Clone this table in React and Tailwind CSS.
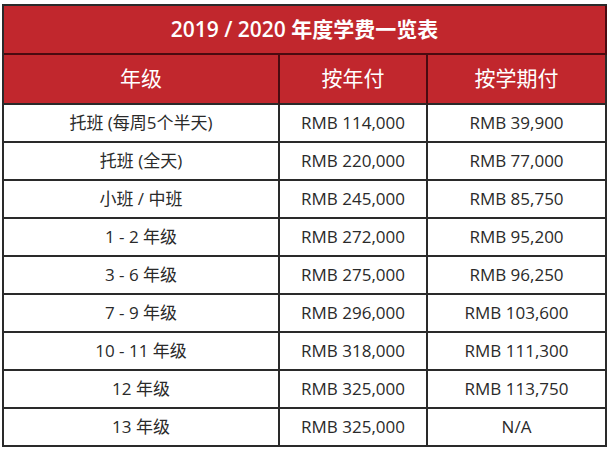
import React from "react";

const rows = [
  ["托班 (每周5个半天)", "RMB 114,000", "RMB 39,900"],
  ["托班 (全天)", "RMB 220,000", "RMB 77,000"],
  ["小班 / 中班", "RMB 245,000", "RMB 85,750"],
  ["1 - 2 年级", "RMB 272,000", "RMB 95,200"],
  ["3 - 6 年级", "RMB 275,000", "RMB 96,250"],
  ["7 - 9 年级", "RMB 296,000", "RMB 103,600"],
  ["10 - 11 年级", "RMB 318,000", "RMB 111,300"],
  ["12 年级", "RMB 325,000", "RMB 113,750"],
  ["13 年级", "RMB 325,000", "N/A"],
];

const App = () => {
  return (
    <div
      className="w-[610px] h-[454px] bg-white pt-[4px] pl-[2px]"
      style={{ fontFamily: '"Open Sans", "Noto Sans CJK SC", sans-serif' }}
    >
      <div className="w-[605px] border-l-2 border-t-2 border-[#2a2a2a] grid grid-cols-[276px_148px_179px]">
        <div className="col-span-3 h-[49px] bg-[#c1272d] border-r-2 border-b-2 border-[#4a0a10] flex items-center justify-center text-white text-[21px] font-semibold">
          2019 / 2020 年度学费一览表
        </div>
        {["年级", "按年付", "按学期付"].map((h, i) => (
          <div
            key={h}
            className={`h-[50px] bg-[#c1272d] border-b-2 border-[#2a2a2a] flex items-center justify-center text-white text-[21px] ${
              i < 2 ? "border-r-2 border-r-[#4a0a10]" : "border-r-2"
            }`}
          >
            {h}
          </div>
        ))}
        {rows.map((r) =>
          r.map((c, j) => (
            <div
              key={r[0] + j}
              className="h-[38px] border-r-2 border-b-2 border-[#2a2a2a] flex items-center justify-center text-[17px] text-[#2a2a2a]"
            >
              {c}
            </div>
          ))
        )}
      </div>
    </div>
  );
};

export default App;
